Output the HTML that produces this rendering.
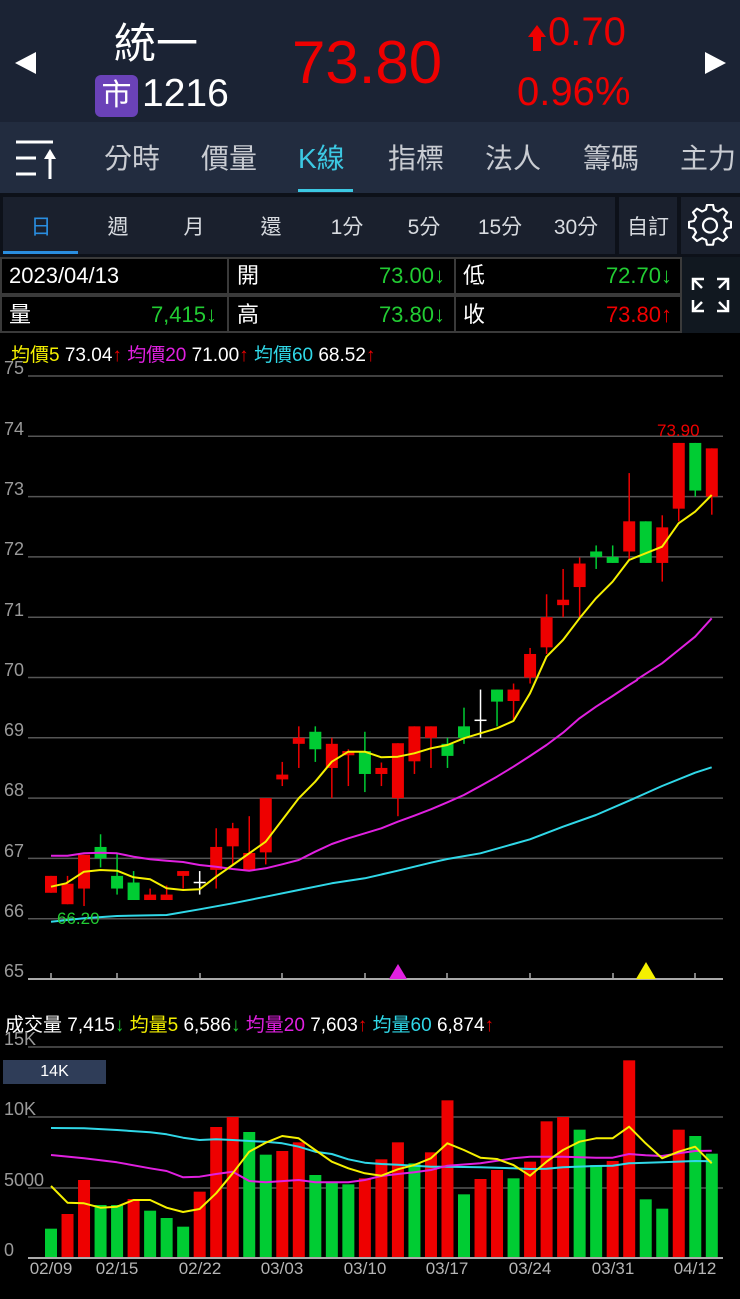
<!DOCTYPE html>
<html><head><meta charset="utf-8">
<style>
*{margin:0;padding:0;box-sizing:border-box}
body{width:740px;height:1299px;background:#000;overflow:hidden;font-family:"Liberation Sans","Noto Sans CJK TC",sans-serif;position:relative;color:#fff}
.a{position:absolute;white-space:nowrap}
#hdr{position:absolute;left:0;top:0;width:740px;height:122px;background:#1b2334}
#tabs{position:absolute;left:0;top:122px;width:740px;height:71px;background:#222c3f}
#seg{position:absolute;left:0;top:193px;width:740px;height:64px;background:#0d1119}
.tb{font-size:28px;color:#c9ccd2;top:137px}
.sg{font-size:21px;color:#d8dbe0;top:211px;transform:translateX(-50%)}
.cell{position:absolute;border:2px solid #3a3a3a;height:38px}
.it{font-size:22px;line-height:30px;height:30px}
.lg{font-size:19px;top:340px}
.yl{font-size:18px;color:#9a9a9a;left:4px}
.dl{font-size:17px;color:#b5b5b5;top:1259px;transform:translateX(-50%)}
.g{color:#22cc33}.r{color:#e00}.y{color:#f5f000}.m{color:#e020e0}.c{color:#30d8e8}
</style></head><body>
<div id="hdr"></div>
<svg class="a" style="left:14px;top:51px" width="24" height="24"><polygon points="22,1 22,23 1,12" fill="#fff"/></svg>
<svg class="a" style="left:703px;top:51px" width="24" height="24"><polygon points="2,1 2,23 23,12" fill="#fff"/></svg>
<div class="a" style="left:114px;top:10px;font-size:42px;color:#fff">統一</div>
<div class="a" style="left:95px;top:75px;width:43px;height:42px;background:#6a42b8;border-radius:6px;font-size:30px;text-align:center;line-height:42px">市</div>
<div class="a" style="left:142px;top:72px;font-size:39px;color:#fff">1216</div>
<div class="a r" style="left:292px;top:28px;font-size:60px">73.80</div>
<svg class="a" style="left:527px;top:24px" width="20" height="28"><polygon points="10,1 19,13 14,13 14,27 6,27 6,13 1,13" fill="#e00"/></svg>
<div class="a r" style="left:548px;top:10px;font-size:40px">0.70</div>
<div class="a r" style="left:517px;top:70px;font-size:40px">0.96%</div>

<div id="tabs"></div>
<svg class="a" style="left:13px;top:137px" width="46" height="44"><g stroke="#fff" stroke-width="3" fill="none"><line x1="3" y1="5" x2="40" y2="5"/><line x1="3" y1="21" x2="23" y2="21"/><line x1="3" y1="37" x2="23" y2="37"/><line x1="37" y1="18" x2="37" y2="42"/></g><polygon points="37,12 43,22 31,22" fill="#fff"/></svg>
<div class="a tb" style="left:104px">分時</div>
<div class="a tb" style="left:201px">價量</div>
<div class="a tb" style="left:298px;color:#3cc8e2">K線</div>
<div class="a" style="left:298px;top:189px;width:55px;height:3px;background:#3cc8e2"></div>
<div class="a tb" style="left:388px">指標</div>
<div class="a tb" style="left:485px">法人</div>
<div class="a tb" style="left:583px">籌碼</div>
<div class="a tb" style="left:680px">主力</div>

<div id="seg"></div>
<div class="a" style="left:3px;top:197px;width:612px;height:57px;background:#1a202d"></div>
<div class="a" style="left:619px;top:197px;width:58px;height:57px;background:#1a202d"></div>
<div class="a" style="left:681px;top:197px;width:59px;height:57px;background:#1a202d"></div>
<div class="a" style="left:3px;top:251px;width:75px;height:3px;background:#2a8ee0"></div>
<div class="a sg" style="left:41px;color:#2a8ee0">日</div>
<div class="a sg" style="left:118px">週</div>
<div class="a sg" style="left:194px">月</div>
<div class="a sg" style="left:271px">還</div>
<div class="a sg" style="left:347px">1分</div>
<div class="a sg" style="left:424px">5分</div>
<div class="a sg" style="left:500px">15分</div>
<div class="a sg" style="left:576px">30分</div>
<div class="a sg" style="left:648px">自訂</div>
<svg class="a" style="left:688px;top:204px" width="44" height="44" viewBox="0 0 44 44"><g fill="none" stroke="#fff" stroke-width="2.2" stroke-linejoin="round"><path d="M19,3 L25,3 L26,8 L30,10 L35,7 L39,11 L36,16 L38,20 L43,21 L43,27 L38,28 L36,32 L39,37 L35,41 L30,38 L26,40 L25,45 L19,45 L18,40 L14,38 L9,41 L5,37 L8,32 L6,28 L1,27 L1,21 L6,20 L8,16 L5,11 L9,7 L14,10 L18,8 Z" transform="translate(0,-2) scale(1,0.95)"/><circle cx="22" cy="21.5" r="7"/></g></svg>

<div class="cell" style="left:0;top:257px;width:229px"></div>
<div class="cell" style="left:227px;top:257px;width:229px"></div>
<div class="cell" style="left:454px;top:257px;width:228px"></div>
<div class="cell" style="left:0;top:295px;width:229px"></div>
<div class="cell" style="left:227px;top:295px;width:229px"></div>
<div class="cell" style="left:454px;top:295px;width:228px"></div>
<div class="a" style="left:682px;top:257px;width:58px;height:76px;background:#111820"></div>
<svg class="a" style="left:690px;top:276px" width="42" height="38"><g stroke="#fff" stroke-width="2.5" fill="none"><path d="M3,14 V3 H14 M3,3 L12,12"/><path d="M38,14 V3 H27 M38,3 L29,12"/><path d="M3,24 V35 H14 M3,35 L12,26"/><path d="M38,24 V35 H27 M38,35 L29,26"/></g></svg>
<div class="a it" style="left:9px;top:261px">2023/04/13</div>
<div class="a it" style="left:237px;top:261px">開</div>
<div class="a it g" style="right:295px;top:261px">73.00↓</div>
<div class="a it" style="left:463px;top:261px">低</div>
<div class="a it g" style="right:68px;top:261px">72.70↓</div>
<div class="a it" style="left:9px;top:300px">量</div>
<div class="a it g" style="right:523px;top:300px">7,415↓</div>
<div class="a it" style="left:237px;top:300px">高</div>
<div class="a it g" style="right:295px;top:300px">73.80↓</div>
<div class="a it" style="left:463px;top:300px">收</div>
<div class="a it r" style="right:68px;top:300px">73.80↑</div>

<div class="a lg" style="left:11px"><span class="y">均價5</span> 73.04<span class="r">↑</span> <span class="m">均價20</span> 71.00<span class="r">↑</span> <span class="c">均價60</span> 68.52<span class="r">↑</span></div>

<svg id="ch" class="a" style="left:0;top:0" width="740" height="1299"></svg>

<div class="a yl" style="top:358px">75</div>
<div class="a yl" style="top:419px">74</div>
<div class="a yl" style="top:479px">73</div>
<div class="a yl" style="top:539px">72</div>
<div class="a yl" style="top:600px">71</div>
<div class="a yl" style="top:660px">70</div>
<div class="a yl" style="top:720px">69</div>
<div class="a yl" style="top:780px">68</div>
<div class="a yl" style="top:841px">67</div>
<div class="a yl" style="top:901px">66</div>
<div class="a yl" style="top:961px">65</div>
<div class="a r" style="left:657px;top:421px;font-size:17px">73.90</div>
<div class="a g" style="left:57px;top:909px;font-size:17px">66.20</div>

<div class="a lg" style="left:5px;top:1010px">成交量 7,415<span class="g">↓</span> <span class="y">均量5</span> 6,586<span class="g">↓</span> <span class="m">均量20</span> 7,603<span class="r">↑</span> <span class="c">均量60</span> 6,874<span class="r">↑</span></div>
<div class="a yl" style="top:1029px">15K</div>
<div class="a yl" style="top:1099px">10K</div>
<div class="a yl" style="top:1170px">5000</div>
<div class="a yl" style="top:1240px">0</div>
<div class="a" style="left:3px;top:1060px;width:103px;height:24px;background:#2f3d58;font-size:16px;text-align:center;line-height:24px;color:#fff">14K</div>

<div class="a dl" style="left:51px">02/09</div>
<div class="a dl" style="left:117px">02/15</div>
<div class="a dl" style="left:200px">02/22</div>
<div class="a dl" style="left:282px">03/03</div>
<div class="a dl" style="left:365px">03/10</div>
<div class="a dl" style="left:447px">03/17</div>
<div class="a dl" style="left:530px">03/24</div>
<div class="a dl" style="left:613px">03/31</div>
<div class="a dl" style="left:695px">04/12</div>

<script>
var s=document.getElementById('ch'),h='';
function Y(p){return 376+(75-p)*60.3}
for(var p=65;p<=75;p++){var y=Y(p);h+='<line x1="28" x2="723" y1="'+y+'" y2="'+y+'" stroke="'+(p==65?'#aaa':'#555')+'" stroke-width="'+(p==65?2:1.5)+'"/>'}
[1047,1117,1188].forEach(function(y){h+='<line x1="28" x2="723" y1="'+y+'" y2="'+y+'" stroke="#555" stroke-width="1.5"/>'});
h+='<line x1="28" x2="723" y1="1258" y2="1258" stroke="#aaa" stroke-width="2"/>';
[51,117,200,282,365,447,530,613,695].forEach(function(x){h+='<line x1="'+x+'" x2="'+x+'" y1="973" y2="979" stroke="#aaa" stroke-width="1.5"/>'});
var C=[[66.43,66.71,66.43,66.71],[66.24,66.71,66.24,66.58],[66.5,67.06,66.21,67.06],[67.19,67.4,66.85,67.0],[66.71,67.09,66.4,66.5],[66.6,66.79,66.31,66.31],[66.31,66.5,66.31,66.4],[66.31,66.55,66.31,66.4],[66.71,66.79,66.5,66.79],[66.6,66.79,66.4,66.6],[66.81,67.5,66.5,67.19],[67.2,67.59,66.9,67.5],[66.8,67.7,66.8,67.09],[67.1,68.0,66.9,68.0],[68.31,68.6,68.2,68.39],[68.9,69.19,68.5,69.0],[69.1,69.19,68.6,68.81],[68.5,69.0,68.0,68.9],[68.71,68.81,68.2,68.78],[68.78,69.1,68.1,68.4],[68.4,68.59,68.2,68.5],[68.0,68.91,67.7,68.91],[68.61,69.19,68.4,69.19],[69.0,69.19,68.5,69.19],[68.9,69.0,68.5,68.7],[69.19,69.5,68.9,69.0],[69.29,69.8,69.0,69.29],[69.8,69.8,69.19,69.6],[69.61,69.9,69.29,69.8],[70.0,70.49,69.9,70.39],[70.5,71.38,70.39,71.0],[71.2,71.8,71.0,71.29],[71.5,71.99,71.0,71.89],[72.09,72.19,71.8,72.0],[72.0,72.19,71.9,71.9],[72.09,73.39,71.95,72.59],[72.59,72.59,71.9,71.9],[71.9,72.69,71.59,72.49],[72.8,73.89,72.59,73.89],[73.89,73.89,73.0,73.1],[73.0,73.8,72.7,73.8]];
C.forEach(function(c,i){var x=51+i*16.52,o=c[0],hi=c[1],lo=c[2],cl=c[3];
 var col=cl>o?'#ee0000':(cl<o?'#00cc33':'#fff');
 h+='<line x1="'+x+'" x2="'+x+'" y1="'+Y(hi)+'" y2="'+Y(lo)+'" stroke="'+col+'" stroke-width="1.5"/>';
 if(cl==o){h+='<line x1="'+(x-6)+'" x2="'+(x+6)+'" y1="'+Y(o)+'" y2="'+Y(o)+'" stroke="#fff" stroke-width="1.5"/>'}
 else{var t=Y(Math.max(o,cl)),b=Y(Math.min(o,cl));h+='<rect x="'+(x-6)+'" y="'+t+'" width="12" height="'+Math.max(b-t,2)+'" fill="'+col+'"/>'}
});
function PL(pts,off,col){var a=pts.map(function(p){return (p[0]/2.119).toFixed(1)+','+(off+p[1]/3).toFixed(1)}).join(' ');h+='<polyline points="'+a+'" fill="none" stroke="'+col+'" stroke-width="2" stroke-linejoin="round"/>'}
PL([[108,725],[178,715],[248,708],[353,705],[423,688],[493,670],[563,650],[633,630],[703,610],[773,595],[843,572],[913,548],[948,537],[1018,520],[1088,492],[1123,478],[1193,440],[1263,405],[1333,362],[1403,318],[1473,278],[1508,262]],680,'#30d8e8');
PL([[108,527],[143,527],[178,520],[213,518],[248,520],[283,530],[318,538],[353,542],[388,546],[423,555],[458,560],[493,567],[528,572],[563,565],[598,553],[633,540],[668,515],[703,492],[738,475],[773,460],[808,445],[843,425],[878,407],[913,388],[948,367],[983,345],[1018,318],[1053,290],[1088,260],[1123,228],[1158,195],[1193,158],[1228,115],[1263,80],[1298,48],[1333,15],[1350,0],[1350,-2],[1403,-50],[1438,-90],[1473,-130],[1508,-185]],680,'#e020e0');
PL([[108,620],[140,610],[178,575],[213,570],[248,572],[283,592],[318,598],[353,625],[388,630],[423,628],[458,590],[493,555],[528,520],[563,485],[598,420],[633,355],[668,305],[703,245],[738,215],[773,215],[808,232],[843,230],[878,220],[913,205],[948,195],[983,175],[1018,160],[1053,145],[1088,123],[1123,40],[1158,-70],[1193,-120],[1228,-185],[1263,-245],[1298,-295],[1333,-360],[1368,-380],[1403,-400],[1438,-470],[1473,-505],[1508,-555]],680,'#f5f000');
h+='<polygon points="398,964 407,979 389,979" fill="#e020e0"/><polygon points="646,962 656,979 636,979" fill="#f5f000"/>';
var V=[['g',686],['r',642],['r',540],['g',615],['g',615],['r',597],['g',632],['g',654],['g',680],['r',575],['r',381],['r',351],['g',396],['g',464],['r',453],['r',427],['g',525],['g',548],['g',553],['r',535],['r',478],['r',427],['g',490],['r',457],['r',301],['g',583],['r',537],['r',510],['g',535],['r',485],['r',364],['r',351],['g',389],['g',495],['r',483],['r',181],['g',598],['g',626],['r',389],['g',408],['g',461]];
V.forEach(function(v,i){var x=51+i*16.52,t=1000+v[1]/3;h+='<rect x="'+(x-6)+'" y="'+t+'" width="12" height="'+(1257-t)+'" fill="'+(v[0]=='r'?'#ee0000':'#00cc33')+'"/>'});
PL([[108,384],[178,385],[248,390],[318,397],[353,403],[388,413],[423,420],[458,418],[493,420],[528,423],[563,425],[598,430],[633,440],[668,455],[703,462],[738,478],[773,488],[808,492],[843,494],[913,500],[948,500],[1018,502],[1088,505],[1123,507],[1158,506],[1193,502],[1263,498],[1298,497],[1333,490],[1403,487],[1473,483],[1508,484]],1000,'#30d8e8');
PL([[108,465],[178,475],[248,487],[318,505],[353,513],[388,532],[423,530],[458,522],[493,515],[528,543],[563,547],[633,540],[668,547],[738,547],[773,540],[808,528],[843,522],[878,517],[913,510],[948,497],[1018,490],[1088,475],[1123,470],[1193,470],[1263,473],[1298,473],[1333,462],[1368,466],[1403,468],[1438,460],[1473,453],[1508,452]],1000,'#e020e0');
PL([[108,558],[143,608],[178,610],[213,623],[248,620],[283,600],[318,600],[353,623],[388,636],[423,627],[458,580],[493,520],[528,455],[563,428],[598,408],[633,415],[668,450],[703,485],[738,505],[773,520],[808,527],[843,508],[878,495],[913,475],[948,430],[983,450],[1018,473],[1053,477],[1088,495],[1123,527],[1158,485],[1193,450],[1228,425],[1263,415],[1298,415],[1333,380],[1368,430],[1403,475],[1438,455],[1473,440],[1508,490]],1000,'#f5f000');
s.innerHTML=h;
</script>
</body></html>
